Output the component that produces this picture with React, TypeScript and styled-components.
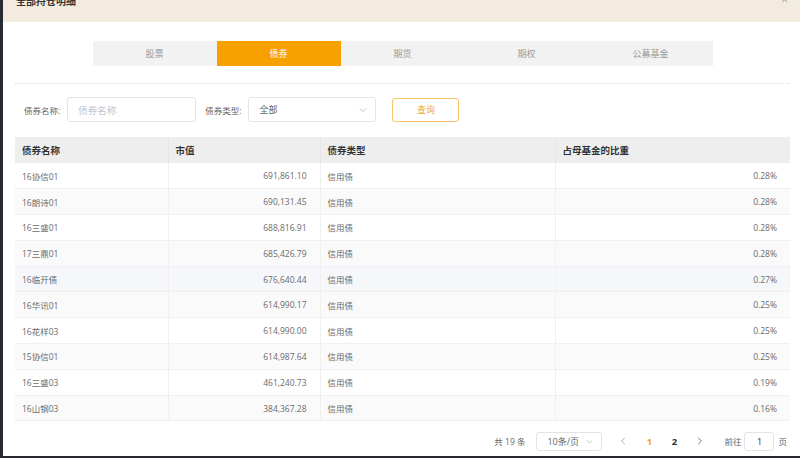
import React from "react";
import styled, { createGlobalStyle } from "styled-components";

const Global = createGlobalStyle`
  html, body { margin: 0; padding: 0; }
  body {
    background: #272a30;
    overflow: hidden;
    font-family: "Open Sans", "Noto Sans CJK SC", sans-serif;
  }
  * { box-sizing: border-box; }
`;

const Dialog = styled.div`
  margin-left: 3px;
  width: 797px;
  height: 456px;
  background: #fff;
  display: flex;
  flex-direction: column;
  overflow: hidden;
`;

const Header = styled.div`
  flex: none;
  height: 44px;
  margin-top: -22px;
  background: #f3ebdf;
  display: flex;
  align-items: center;
  justify-content: space-between;
  padding: 0 12px 0 13px;
`;

const Title = styled.div`
  font-size: 10px;
  font-weight: 700;
  color: #333;
`;

const Close = styled.div`
  font-size: 12px;
  color: #999;
  line-height: 1;
`;

const Body = styled.div`
  flex: 1;
  display: flex;
  flex-direction: column;
  padding: 0 10px 0 12px;
`;

const TabBar = styled.div`
  margin-top: 19px;
  align-self: center;
  display: flex;
  background: #f2f2f2;
`;

const Tab = styled.div<{ $active?: boolean }>`
  width: 124px;
  height: 25px;
  display: flex;
  align-items: center;
  justify-content: center;
  font-size: 9px;
  color: ${(p) => (p.$active ? "#fff" : "#999")};
  background: ${(p) => (p.$active ? "#f7a100" : "transparent")};
`;

const Divider = styled.div`
  margin-top: 17px;
  border-top: 1px dotted #dcdcdc;
`;

const FilterRow = styled.div`
  margin-top: 13px;
  display: flex;
  align-items: center;
  padding-left: 9px;
  height: 25px;
`;

const Label = styled.span`
  font-size: 8.5px;
  color: #666;
  margin-right: 7px;
`;

const TextInput = styled.div`
  width: 129px;
  height: 25px;
  border: 1px solid #e2e4e8;
  border-radius: 3px;
  display: flex;
  align-items: center;
  padding-left: 10px;
  font-size: 9.5px;
  color: #c0c4cc;
  margin-right: 9px;
`;

const Select = styled.div<{ $w: number; $h: number }>`
  width: ${(p) => p.$w}px;
  height: ${(p) => p.$h}px;
  border: 1px solid #e2e4e8;
  border-radius: 3px;
  display: flex;
  align-items: center;
  justify-content: space-between;
  padding: 0 8px 0 10px;
  font-size: 9px;
  color: #606266;
`;

const QueryButton = styled.div`
  margin-left: 16px;
  width: 67px;
  height: 24px;
  border: 1px solid #f9c46b;
  border-radius: 3px;
  display: flex;
  align-items: center;
  justify-content: center;
  font-size: 9px;
  color: #f5a623;
`;

const Table = styled.table`
  margin-top: 15px;
  width: 775px;
  border-collapse: collapse;
  table-layout: fixed;
`;

const Th = styled.th`
  height: 26px;
  background: #eeeeee;
  text-align: left;
  padding: 0 7px;
  font-size: 9.5px;
  font-weight: 700;
  color: #333;
  border-right: 1px solid #e6e6e6;
  &:last-child { border-right: none; }
`;

const Tr = styled.tr<{ $bg: string }>`
  background: ${(p) => p.$bg};
`;

const Td = styled.td<{ $right?: boolean }>`
  height: 25.8px;
  padding: 0 ${(p) => (p.$right ? "13px" : "7px")} 0 7px;
  text-align: ${(p) => (p.$right ? "right" : "left")};
  font-size: 8.5px;
  color: #6a6a6a;
  border-bottom: 1px solid #f0f0f0;
  border-right: 1px solid #f0f0f0;
  &:last-child { border-right: none; }
`;

const Pager = styled.div`
  margin-top: 11px;
  height: 18px;
  display: flex;
  align-items: center;
  justify-content: flex-end;
  padding-right: 3px;
  font-size: 8.5px;
  color: #666;
`;

const Total = styled.span`
  margin-right: 11px;
`;

const PageBtn = styled.div<{ $active?: boolean }>`
  width: 25px;
  display: flex;
  align-items: center;
  justify-content: center;
  font-size: 9.5px;
  font-weight: 700;
  color: ${(p) => (p.$active ? "#f5a100" : "#333")};
`;

const Pages = styled.div`
  margin-left: 9.5px;
  display: flex;
`;

const Goto = styled.span`
  margin-left: 12.5px;
  margin-right: 3px;
`;

const PageInput = styled.div`
  width: 30px;
  height: 19px;
  border: 1px solid #e2e4e8;
  border-radius: 3px;
  display: flex;
  align-items: center;
  justify-content: center;
  font-size: 9px;
  color: #333;
  margin-right: 4px;
`;

const Chevron = ({ dir, size = 8, color = "#b0b3b8" }: { dir: "down" | "left" | "right"; size?: number; color?: string }) => {
  const pts =
    dir === "down" ? "1,3 5,7 9,3" : dir === "left" ? "6,1 2,5 6,9" : "4,1 8,5 4,9";
  return (
    <svg width={size} height={size} viewBox="0 0 10 10">
      <polyline points={pts} fill="none" stroke={color} strokeWidth="1" />
    </svg>
  );
};

const rows = [
  ["16协信01", "691,861.10", "信用债", "0.28%"],
  ["16朗诗01", "690,131.45", "信用债", "0.28%"],
  ["16三盛01", "688,816.91", "信用债", "0.28%"],
  ["17三鼎01", "685,426.79", "信用债", "0.28%"],
  ["16临开债", "676,640.44", "信用债", "0.27%"],
  ["16华讯01", "614,990.17", "信用债", "0.25%"],
  ["16花样03", "614,990.00", "信用债", "0.25%"],
  ["15协信01", "614,987.64", "信用债", "0.25%"],
  ["16三盛03", "461,240.73", "信用债", "0.19%"],
  ["16山钢03", "384,367.28", "信用债", "0.16%"],
];

const tabs = ["股票", "债券", "期货", "期权", "公募基金"];

export default function App() {
  return (
    <>
      <Global />
      <Dialog>
        <Header>
          <Title>全部持仓明细</Title>
          <Close>×</Close>
        </Header>
        <Body>
          <TabBar>
            {tabs.map((t) => (
              <Tab key={t} $active={t === "债券"}>
                {t}
              </Tab>
            ))}
          </TabBar>
          <Divider />
          <FilterRow>
            <Label>债券名称:</Label>
            <TextInput>债券名称</TextInput>
            <Label>债券类型:</Label>
            <Select $w={128} $h={25}>
              <span>全部</span>
              <Chevron dir="down" />
            </Select>
            <QueryButton>查询</QueryButton>
          </FilterRow>
          <Table>
            <colgroup>
              <col style={{ width: 153 }} />
              <col style={{ width: 152 }} />
              <col style={{ width: 235 }} />
              <col style={{ width: 235 }} />
            </colgroup>
            <thead>
              <tr>
                <Th>债券名称</Th>
                <Th>市值</Th>
                <Th>债券类型</Th>
                <Th>占母基金的比重</Th>
              </tr>
            </thead>
            <tbody>
              {rows.map((r, i) => (
                <Tr key={r[0]} $bg={i === 4 ? "#f5f7fa" : i % 2 === 1 ? "#fafafa" : "#fff"}>
                  <Td>{r[0]}</Td>
                  <Td $right>{r[1]}</Td>
                  <Td>{r[2]}</Td>
                  <Td $right>{r[3]}</Td>
                </Tr>
              ))}
            </tbody>
          </Table>
          <Pager>
            <Total>共 19 条</Total>
            <Select $w={66} $h={19}>
              <span>10条/页</span>
              <Chevron dir="down" size={7} />
            </Select>
            <Pages>
              <PageBtn>
                <Chevron dir="left" size={8} color="#999" />
              </PageBtn>
              <PageBtn $active>1</PageBtn>
              <PageBtn>2</PageBtn>
              <PageBtn>
                <Chevron dir="right" size={8} color="#555" />
              </PageBtn>
            </Pages>
            <Goto>前往</Goto>
            <PageInput>1</PageInput>
            <span>页</span>
          </Pager>
        </Body>
      </Dialog>
    </>
  );
}
